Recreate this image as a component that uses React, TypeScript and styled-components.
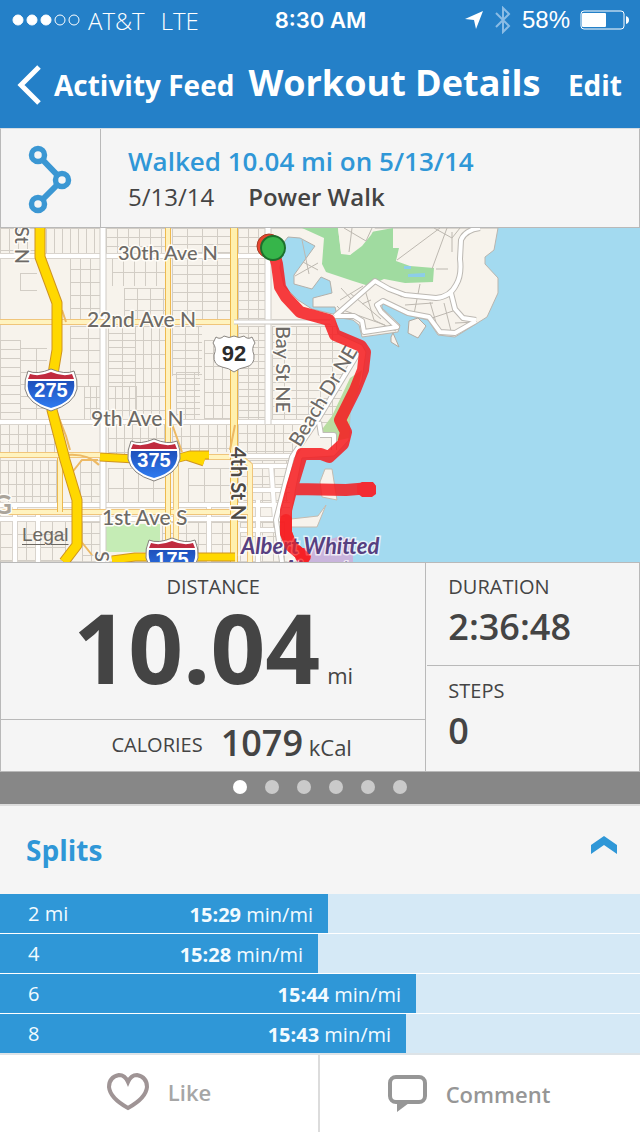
import React from "react";
import styled, { createGlobalStyle } from "styled-components";

const blue = "#2f97d7";
const barBlue = "#2480c8";
const line = "#b9b9b9";
const ink = "#444444";
const panel = "#f5f5f5";

const GlobalStyle = createGlobalStyle`
  * { box-sizing: border-box; }
  body { margin: 0; background: #fff; color: ${ink}; font-family: "Open Sans", "Noto Sans", sans-serif; }
  button { font: inherit; color: inherit; background: none; border: 0; margin: 0; padding: 0; text-align: left; cursor: pointer; }
  h1, h2, p, ol, dl, dd { margin: 0; padding: 0; font-weight: inherit; }
  svg { display: block; flex: none; }
`;

const Page = styled.main`
  display: flex;
  flex-direction: column;
`;

const Header = styled.header`
  background: ${barBlue};
  color: #fff;
`;

const StatusBar = styled.div`
  display: grid;
  grid-template-columns: 1fr auto 1fr;
  align-items: center;
  height: 40px;
  padding: 0 11px 0 12px;
  font-family: "Liberation Sans", Arial, sans-serif;
  font-size: 24px;
`;

const Carrier = styled.div`
  display: flex;
  align-items: center;
  gap: 8px;
  font-family: "Open Sans", sans-serif;
  font-weight: 300;
  font-size: 24px;
`;

const Network = styled.span`
  margin-left: 8px;
`;

const Clock = styled.time`
  font-family: Inter, sans-serif;
  font-weight: 600;
  font-size: 22px;
`;

const Indicators = styled.div`
  display: flex;
  align-items: center;
  justify-content: flex-end;
  gap: 10px;
  font-size: 24px;
`;

const NavBar = styled.nav`
  display: flex;
  align-items: center;
  height: 88px;
  padding: 0 18px 4px 17px;
  font-size: 28px;
  font-weight: 700;
`;

const BackButton = styled.button`
  display: flex;
  align-items: center;
  gap: 13px;
  padding-top: 6px;
`;

const Title = styled.h1`
  margin-left: 14px;
  font-size: 36px;
  font-weight: 700;
`;

const EditButton = styled.button`
  margin-left: auto;
  padding-top: 6px;
`;

const Summary = styled.section`
  display: flex;
  height: 100px;
  background: ${panel};
  border: 1px solid ${line};
  border-top-color: #d5dde3;
`;

const ActivityIcon = styled.div`
  display: flex;
  align-items: center;
  width: 100px;
  padding: 2px 0 0 27px;
  border-right: 1px solid ${line};
`;

const SummaryText = styled.div`
  padding: 15px 27px 0;
  line-height: 35px;
  font-size: 24px;
`;

const SummaryTitle = styled.h2`
  color: ${blue};
  font-size: 26px;
  font-weight: 600;
`;

const SummaryMeta = styled.p`
  display: flex;
  gap: 34px;
`;

const Strong = styled.strong`
  font-weight: 600;
`;

const MapArea = styled.section`
  position: relative;
  height: 334px;
  overflow: hidden;
`;

const LegalLink = styled.a`
  position: absolute;
  left: 22px;
  bottom: 16px;
  color: #6d6963;
  font: 19px/22px "Liberation Sans", Arial, sans-serif;
  text-underline-offset: 3px;
  text-decoration-thickness: 1px;
`;

const Stats = styled.dl`
  display: grid;
  grid-template-columns: 2fr 1fr;
  height: 210px;
  background: ${panel};
  border: 1px solid ${line};
`;

const StatColumn = styled.div<{ $divided?: boolean }>`
  display: flex;
  flex-direction: column;
  border-right: ${(p) => (p.$divided ? `1px solid ${line}` : "0")};
`;

const StatLabel = styled.dt`
  font-size: 20px;
  line-height: 24px;
`;

const Distance = styled.div`
  flex: 1;
  padding-top: 12px;
  text-align: center;
  border-bottom: 1px solid ${line};
`;

const DistanceValue = styled.dd`
  display: flex;
  justify-content: center;
  align-items: baseline;
  gap: 7px;
  font-size: 22px;
  line-height: 24px;
`;

const BigNumber = styled.strong`
  font-size: 96px;
  font-weight: 700;
  line-height: 96px;
`;

const Calories = styled.div`
  display: flex;
  align-items: center;
  justify-content: center;
  gap: 18px;
  height: 51px;
  padding: 0 0 1px 37px;
`;

const Value = styled.dd`
  font-size: 22px;
  line-height: 40px;
`;

const Number = styled.strong`
  font-size: 36px;
  font-weight: 600;
`;

const SideStat = styled.div`
  flex: 1;
  padding: 12px 22px 0;
  &:first-child {
    flex: 0 0 102px;
  }
  & + & {
    border-top: 1px solid ${line};
    margin-left: 1px;
    padding-left: 21px;
    padding-top: 13px;
  }
`;

const SideValue = styled(Value)`
  line-height: 56px;
`;

const Pager = styled.nav`
  display: flex;
  justify-content: center;
  gap: 18px;
  height: 32px;
  padding-top: 8px;
  background: #878787;
`;

const Dot = styled.button<{ $active?: boolean }>`
  width: 14px;
  height: 14px;
  border-radius: 50%;
  background: ${(p) => (p.$active ? "#fff" : "#cacaca")};
`;

const SplitsToggle = styled.button`
  display: flex;
  justify-content: space-between;
  align-items: center;
  width: 100%;
  height: 90px;
  padding: 0 22px 0 26px;
  background: ${panel};
  border-top: 2px solid #dcdcdc;
  color: ${blue};
  font-size: 28px;
  font-weight: 700;
`;

const ChevronSlot = styled.span`
  padding-bottom: 10px;
`;

const SplitList = styled.ol`
  list-style: none;
  display: flex;
  flex-direction: column;
  gap: 1px;
  border-bottom: 2px solid #dde3e7;
`;

const SplitRow = styled.li`
  background: #d5e9f6;
`;

const SplitBar = styled.div`
  display: flex;
  justify-content: space-between;
  height: 39px;
  padding: 0 15px 0 28px;
  background: ${blue};
  color: #f2fbff;
  font-size: 20px;
  line-height: 40px;
`;

const Pace = styled.span`
  padding-top: 1px;
  & strong { font-weight: 700; }
`;

const Footer = styled.footer`
  display: grid;
  grid-template-columns: 1fr 1fr;
  height: 77px;
  background: #fff;
`;

const FooterButton = styled.button<{ $tone: string }>`
  display: flex;
  align-items: center;
  justify-content: center;
  gap: 19px;
  padding-bottom: 3px;
  color: ${(p) => p.$tone};
  font-size: 22px;
  font-weight: 600;
  & + & { padding: 0 22px 0 0; }
  &:first-child { border-right: 2px solid #dcdcdc; }
`;

const range = (from: number, to: number, step: number) => {
  const out: number[] = [];
  for (let v = from; v <= to; v += step) out.push(v);
  return out;
};

// Residential blocks: x, y, width, height, column spacing, row spacing
const blocks: number[][] = [
  [0, 228, 35, 28, 9, 22], [46, 228, 56, 28, 8, 40], [106, 228, 60, 28, 11, 9],
  [172, 228, 60, 28, 15, 8], [238, 228, 28, 94, 10, 9], [20, 273, 17, 17, 20, 17],
  [70, 256, 32, 66, 10, 13], [112, 256, 54, 30, 11, 16], [124, 288, 42, 34, 13, 11],
  [172, 256, 60, 66, 15, 9], [0, 340, 20, 82, 20, 9], [20, 348, 27, 74, 16, 12],
  [70, 326, 33, 60, 18, 12], [84, 386, 19, 36, 6, 11], [108, 326, 27, 60, 14, 7],
  [135, 326, 31, 94, 8, 14], [108, 386, 28, 34, 7, 12], [172, 326, 30, 50, 13, 8],
  [176, 372, 24, 50, 9, 6], [204, 340, 28, 80, 9, 13], [238, 326, 28, 96, 10, 7],
  [272, 326, 70, 96, 12, 8], [0, 424, 55, 30, 9, 10], [0, 460, 58, 43, 8, 12],
  [108, 424, 58, 30, 8, 14], [172, 424, 60, 28, 9, 12], [80, 460, 22, 44, 11, 12],
  [108, 468, 58, 35, 15, 20], [188, 468, 44, 34, 16, 17], [238, 424, 56, 30, 9, 9],
  [238, 460, 50, 42, 12, 8], [0, 521, 66, 40, 13, 13], [82, 522, 22, 40, 9, 11],
  [162, 522, 70, 40, 12, 11], [240, 522, 44, 40, 11, 14],
];

const streets = blocks
  .map(([x, y, w, h, dx, dy]) =>
    range(x, x + w, dx).map((v) => `M${v} ${y}V${y + h}`).join("") +
    range(y, y + h, dy).map((v) => `M${x} ${v}H${x + w}`).join(""))
  .join("");

const land =
  "M0 228H498L494 250L485 257V264L498 278V293L487 317L455 337L438 335L428 320L407 315L382 303V308L400 325L398 332L362 337L359 325L353 320L335 317L338 334L362 345L366 352L362 380L350 410L349 440L334 456L302 458L296 487L291 515V530L297 545L305 562H0Z";

const route =
  "M273 250L277 264L280 287L286 297L300 312L329 320L335 335L361 346L365 352L363 370L355 390L340 420L346 432L343 444L329 457L321 454L302 454L292 487L286 510V533L291 546L304 557M295 489L346 490L370 488";

type RoadProps = { d: string; w: number; fill: string; edge: string };
const Road = ({ d, w, fill, edge }: RoadProps) => (
  <g fill="none" strokeLinejoin="round">
    <path d={d} stroke={edge} strokeWidth={w + 2} />
    <path d={d} stroke={fill} strokeWidth={w} />
  </g>
);

const Interstate = ({ x, y, n }: { x: number; y: number; n: string }) => (
  <g transform={`translate(${x} ${y})`}>
    <path d="M-23-18Q-14-14 0-20Q14-14 23-18Q27-9 26 0Q23 15 0 22Q-23 15-26 0Q-27-9-23-18Z" fill="#fff" stroke="#85817c" strokeWidth="1" />
    <path d="M-21-15Q-12-12 0-17Q12-12 21-15L23-10H-23Z" fill="#c02b3f" />
    <path d="M-23-8H23Q26 12 0 19Q-26 12-23-8Z" fill="url(#shield)" />
    <text textAnchor="middle" y="8" fill="#fff" fontSize="20" fontWeight="700" fontFamily="Liberation Sans, sans-serif">{n}</text>
  </g>
);

const WorkoutMap = () => (
  <svg width="100%" height="334" viewBox="0 228 640 334" preserveAspectRatio="xMidYMid slice" role="img" aria-label="Route map">
    <defs>
      <clipPath id="land"><path d={land} /></clipPath>
      <linearGradient id="shield" x1="0" y1="0" x2="0" y2="1">
        <stop offset="0" stopColor="#1f50bb" />
        <stop offset="1" stopColor="#2f7bf0" />
      </linearGradient>
    </defs>
    <rect y="228" width="640" height="334" fill="#a3daf0" />
    <path d={land} fill="#f7f3ec" stroke="#b9b5ae" strokeWidth="1" />
    <g clipPath="url(#land)">
      <path d={streets} stroke="#d2cdc5" fill="none" strokeWidth="1" shapeRendering="crispEdges" />
      <path d="M106 524H160V542L146 552H106Z" fill="#c5ecb5" />
      <path d="M302 228H338L341 254L350 255L371 232L393 228V248H399L396 261L410 266L434 268L433 282L405 283L384 279L369 286L353 281L326 272L322 264L324 238Z" fill="#a0dba0" />
      <path d="M338 228L341 252L350 255L362 246L371 235L375 228Z" fill="#f7f3ec" />
      <path d="M344 228L366 241L372 228M352 228L349 252M397 260L440 228M434 228L452 238L460 228M447 228L432 269M436 269H448M452 232V252" stroke="#bdb8b0" fill="none" />
      <path d="M341 288L352 300L340 309L385 325M350 293L381 319M337 306L360 330M365 290L374 320L396 331M386 288L402 297M420 284L414 314M405 305L433 303M430 302L437 326M444 303L451 331M453 311L432 318M455 323L477 322M340 300L363 286M362 304L371 300" stroke="#bdb8b0" fill="none" />
      <path d="M288 237L300 238L315 246L294 275V284L312 289L321 277L330 281L332 293L313 298V307H335L337 315L312 309L298 300L284 286L280 268L284 242Z" fill="#a3daf0" stroke="#b3b0aa" />
      <path d="M404 266H411V269H404ZM408 274L425 273V277H408Z" fill="#8dcde8" />
      <path d="M302 240L309 274M295 276L318 263M303 262L318 270" stroke="#bdb8b0" />
      <path d="M350 378L332 416L320 432L336 441L349 438L362 370Z" fill="#b9dda1" />
      <Road d="M0 256H266L275 252M0 422H310M0 505H290M0 519H285M272 322H331M238 456H295M15 505V562M38 515V562M209 505V562M242 466H288M240 490H290M258 500V562M271 465L275 520M240 530H280" w={4} fill="#fff" edge="#d9d4cd" />
      <Road d="M103 228V562M268 228V424" w={5} fill="#fff" edge="#cfcbc5" />
      <Road d="M0 322H234M0 455H100M130 457H240L250 465V562M0 512H250M176 460V540" w={4} fill="#fff3bf" edge="#f0c57b" />
      <Road d="M168 228V540M60 458V512" w={4} fill="#fff1bb" edge="#edb94f" />
      <Road d="M234 228V562" w={6} fill="#fff0ad" edge="#edb548" />
      <Road d="M234 322H330" w={3} fill="#fff" edge="#cbc7c1" />
      <Road d="M357 355L320 416L292 457L276 520L282 562M320 435H334V450M321 435L319 422" w={4} fill="#fff" edge="#c0bdb7" />
      <path d="M54 405L66 436L70 450M70 475L82 460L98 460M66 455Q88 453 99 465M62 310L66 322M172 424L182 452M235 425L230 450M80 540L92 555" stroke="#edb964" fill="none" strokeWidth="2" />
    </g>
    <Road d="M335 316L375 281L389 289L405 295L436 298Q450 297 456 285Q462 275 460 259L461 240Q465 230 480 228M451 293L455 309L463 318L476 320M476 321L455 333L440 332L429 317L408 313L383 301L377 305L381 312L397 327L364 332L362 321L354 316H335" w={4} fill="#fff" edge="#bcb8b2" />
    <path d="M408 333L409 321L418 318L426 326L418 338ZM391 337L393 333L399 347L391 342Z" fill="#f7f3ec" stroke="#b0aaa2" />
    <path d="M320 482L325 469H332L337 500L322 497ZM291 519L318 516L326 505L317 527H291Z" fill="#f7f3ec" stroke="#c3bbb0" />
    <path d="M298 550L340 536L353 540V562H302Z" fill="#c9b4dc" />

    <Road d="M40 228V257L57 303V350L52 380V410L65 460L77 500V545L64 562" w={9} fill="#ffd800" edge="#cf9420" />
    <Road d="M100 457L135 459M175 459L190 455H209M186 456L204 462M112 560L135 557H235" w={7} fill="#ffd800" edge="#cf9420" />

    <g fill="#6d6a66" fontFamily="Lato, sans-serif" fontSize="21" fontWeight="500" stroke="#fffdf8" strokeWidth="3" strokeLinejoin="round" paintOrder="stroke">
      <text x="118" y="260" fontSize="20">30th Ave N</text>
      <text x="87" y="327">22nd Ave N</text>
      <text x="91" y="426">9th Ave N</text>
      <text x="102" y="525">1st Ave S</text>
      <text transform="translate(15 226) rotate(90)" fontSize="20">St N</text>
      <text transform="translate(95 551) rotate(90)" fontSize="20">S</text>
      <text transform="translate(276 326) rotate(90)" fontSize="20">Bay St NE</text>
      <text transform="translate(300 448) rotate(-59)" fontSize="20">Beach Dr NE</text>
      <text transform="translate(231 447) rotate(90)" fill="#4e4a45" fontWeight="700" fontSize="20">4th St N</text>
      <text x="-7" y="514" fill="#aaa49b" fontWeight="700" fontSize="26">G</text>
    </g>

    <path d={route} fill="none" stroke="#f61c20" strokeOpacity="0.86" strokeWidth="12" strokeLinejoin="round" strokeLinecap="round" />
    <circle cx="303" cy="556" r="8" fill="#f32936" />
    <path d="M357 485L362 482H373L376 486V494L372 497H362L357 493Z" fill="#f32b33" />
    <circle cx="269" cy="246" r="12" fill="#e8452f" stroke="#a63a22" />
    <circle cx="273" cy="248" r="12" fill="#36b54a" stroke="#1c702c" strokeWidth="2" />

    <g fill="#574080" fontFamily="Lato, sans-serif" fontSize="22" fontWeight="700" fontStyle="italic" stroke="#fff" strokeOpacity="0.7" strokeWidth="3" paintOrder="stroke">
      <text x="241" y="554">Albert Whitted</text>
      <text x="283" y="577">Airport</text>
    </g>
    <path d="M286 520V533L291 546L304 557" fill="none" stroke="#f61c20" strokeOpacity="0.7" strokeWidth="12" strokeLinejoin="round" strokeLinecap="round" />

    <path d="M216 337Q220 340 224 336Q229 339 234 336Q239 339 244 336Q248 340 252 337L255 343Q251 348 254 355Q255 365 246 367Q239 368 234 372Q229 368 222 367Q213 365 214 355Q217 348 213 343Z" fill="#fff" stroke="#8a8681" strokeWidth="1" />
    <text x="234" y="361" textAnchor="middle" fontFamily="Liberation Sans, sans-serif" fontWeight="700" fontSize="22" fill="#2c2c2c">92</text>
    <Interstate x={51} y={389} n="275" />
    <Interstate x={154} y={459} n="375" />
    <Interstate x={172} y={558} n="175" />
  </svg>
);

const splits = [
  { at: "2 mi", pace: "15:29", share: 51.25 },
  { at: "4", pace: "15:28", share: 49.7 },
  { at: "6", pace: "15:44", share: 65 },
  { at: "8", pace: "15:43", share: 63.45 },
];

export default function App() {
  return (
    <>
      <GlobalStyle />
      <Page>
        <Header>
          <StatusBar>
            <Carrier>
              <svg width="68" height="12" aria-hidden="true" fill="#fff" stroke="#fff">
                <circle cx="6" cy="6" r="5" />
                <circle cx="20" cy="6" r="5" />
                <circle cx="34" cy="6" r="5" />
                <circle cx="48" cy="6" r="5" fill="none" />
                <circle cx="62" cy="6" r="5" fill="none" />
              </svg>
              <span>AT&amp;T</span>
              <Network>LTE</Network>
            </Carrier>
            <Clock>8:30 AM</Clock>
            <Indicators>
              <svg width="20" height="20" viewBox="0 0 20 20" aria-hidden="true">
                <path d="M19 1L12 19L10 10L1 9Z" fill="#fff" />
              </svg>
              <svg width="18" height="28" viewBox="0 0 18 28" aria-hidden="true" fill="none" stroke="#8bbce5" strokeWidth="2">
                <path d="M2 7L15 20L9 26V2L15 8L2 21" />
              </svg>
              <span>58%</span>
              <svg width="49" height="20" viewBox="0 0 49 20" aria-hidden="true">
                <rect x="1" y="1" width="43" height="18" rx="3" fill="none" stroke="#fff" strokeWidth="1" />
                <rect x="2" y="3" width="24" height="14" rx="1" fill="#fff" />
                <path d="M46 6Q49 7 49 10Q49 13 46 14Z" fill="#fff" />
              </svg>
            </Indicators>
          </StatusBar>
          <NavBar>
            <BackButton>
              <svg width="24" height="40" viewBox="0 0 24 40" aria-hidden="true" fill="none" stroke="#fff" strokeWidth="5">
                <path d="M22 2L4 20L22 38" />
              </svg>
              Activity Feed
            </BackButton>
            <Title>Workout Details</Title>
            <EditButton>Edit</EditButton>
          </NavBar>
        </Header>

        <Summary>
          <ActivityIcon>
            <svg width="44" height="70" viewBox="0 0 44 70" aria-hidden="true" fill={panel} stroke="#3b97d3">
              <path d="M10 11L34 36L10 60" fill="none" strokeWidth="6" />
              <circle cx="10" cy="11" r="6.5" strokeWidth="5.5" />
              <circle cx="34" cy="36" r="6.5" strokeWidth="5.5" />
              <circle cx="10" cy="60" r="6.5" strokeWidth="5.5" />
            </svg>
          </ActivityIcon>
          <SummaryText>
            <SummaryTitle>Walked 10.04 mi on 5/13/14</SummaryTitle>
            <SummaryMeta>
              <span>5/13/14</span>
              <Strong>Power Walk</Strong>
            </SummaryMeta>
          </SummaryText>
        </Summary>

        <MapArea>
          <WorkoutMap />
          <LegalLink href="#legal">Legal</LegalLink>
        </MapArea>

        <Stats>
          <StatColumn $divided>
            <Distance>
              <StatLabel>DISTANCE</StatLabel>
              <DistanceValue>
                <BigNumber>10.04</BigNumber>
                <span>mi</span>
              </DistanceValue>
            </Distance>
            <Calories>
              <StatLabel>CALORIES</StatLabel>
              <Value>
                <Number>1079</Number> kCal
              </Value>
            </Calories>
          </StatColumn>
          <StatColumn>
            <SideStat>
              <StatLabel>DURATION</StatLabel>
              <SideValue><Number>2:36:48</Number></SideValue>
            </SideStat>
            <SideStat>
              <StatLabel>STEPS</StatLabel>
              <SideValue><Number>0</Number></SideValue>
            </SideStat>
          </StatColumn>
        </Stats>

        <Pager aria-label="Pages">
          {[1, 2, 3, 4, 5, 6].map((n) => (
            <Dot key={n} $active={n === 1} aria-label={`Page ${n}`} />
          ))}
        </Pager>

        <SplitsToggle aria-expanded="true">
          Splits
          <ChevronSlot>
            <svg width="28" height="18" viewBox="0 0 28 18" aria-hidden="true">
              <path d="M1 9L14 0L27 9V18L14 9L1 18Z" fill={blue} />
            </svg>
          </ChevronSlot>
        </SplitsToggle>

        <SplitList>
          {splits.map((s) => (
            <SplitRow key={s.at}>
              <SplitBar style={{ width: `${s.share}%` }}>
                <span>{s.at}</span>
                <Pace><strong>{s.pace}</strong> min/mi</Pace>
              </SplitBar>
            </SplitRow>
          ))}
        </SplitList>

        <Footer>
          <FooterButton $tone="#a6a6a6">
            <svg width="42" height="38" viewBox="0 0 42 38" aria-hidden="true" fill="none" stroke="#9f9495" strokeWidth="4">
              <path d="M21 9Q18 2 12 2Q2 4 2 14Q3 25 21 35Q39 25 40 14Q40 4 30 2Q24 2 21 9Z" />
            </svg>
            Like
          </FooterButton>
          <FooterButton $tone="#969696">
            <svg width="39" height="38" viewBox="0 0 39 38" aria-hidden="true">
              <rect x="2" y="2" width="35" height="25" rx="6" fill="none" stroke="#969696" strokeWidth="4" />
              <path d="M9 28H21L9 37Z" fill="#969696" />
            </svg>
            Comment
          </FooterButton>
        </Footer>
      </Page>
    </>
  );
}
